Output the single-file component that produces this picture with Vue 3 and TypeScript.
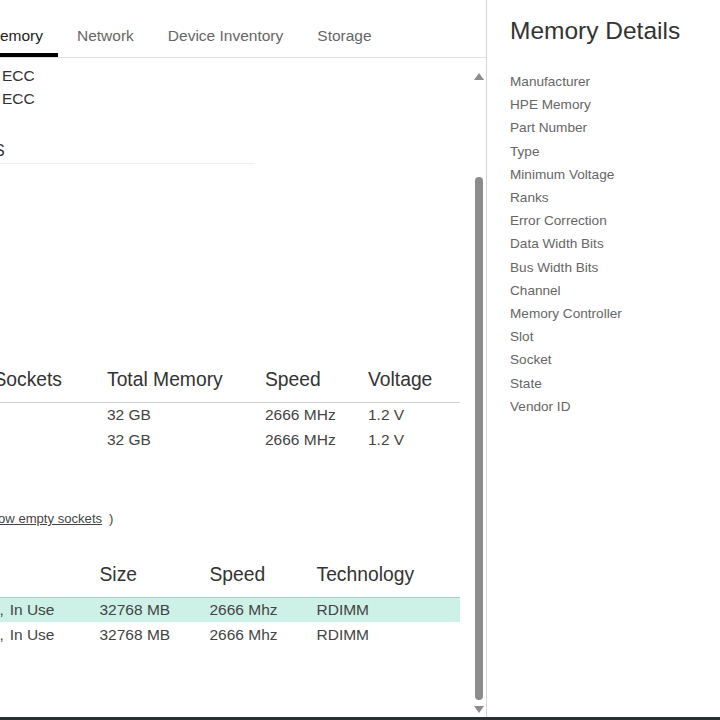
<script setup lang="ts">
const tabs = ['Memory', 'Network', 'Device Inventory', 'Storage']

const processors = [
  { total: '32 GB', speed: '2666 MHz', voltage: '1.2 V' },
  { total: '32 GB', speed: '2666 MHz', voltage: '1.2 V' },
]

const dimms = [
  { health: 'Good', state: 'In Use', size: '32768 MB', speed: '2666 Mhz', tech: 'RDIMM', selected: true },
  { health: 'Good', state: 'In Use', size: '32768 MB', speed: '2666 Mhz', tech: 'RDIMM', selected: false },
]

const details = [
  'Manufacturer', 'HPE Memory', 'Part Number', 'Type', 'Minimum Voltage',
  'Ranks', 'Error Correction', 'Data Width Bits', 'Bus Width Bits', 'Channel',
  'Memory Controller', 'Slot', 'Socket', 'State', 'Vendor ID',
]
</script>

<template>
  <div class="page">
    <div class="shell">
      <main class="main">
        <nav class="tabs">
          <a v-for="(t, i) in tabs" :key="t" class="tab" :class="{ active: i === 0 }">{{ t }}</a>
        </nav>
        <div class="body">
          <div class="content">
            <p class="ecc">ECC</p>
            <p class="ecc">ECC</p>
            <h3 class="section">S</h3>

            <div class="table one">
              <div class="row head">
                <span class="first">Sockets</span><span>Total Memory</span><span>Speed</span><span>Voltage</span>
              </div>
              <div v-for="(p, i) in processors" :key="i" class="row cell">
                <span></span><span>{{ p.total }}</span><span>{{ p.speed }}</span><span>{{ p.voltage }}</span>
              </div>
            </div>

            <p class="toggle"><a>Show empty sockets</a><span class="paren">)</span></p>

            <div class="table two">
              <div class="row head">
                <span></span><span>Size</span><span>Speed</span><span>Technology</span>
              </div>
              <div v-for="(d, i) in dimms" :key="i" class="row cell" :class="{ selected: d.selected }">
                <span class="status">{{ d.health }},<span class="state">{{ d.state }}</span></span><span>{{ d.size }}</span><span>{{ d.speed }}</span><span>{{ d.tech }}</span>
              </div>
            </div>
          </div>

          <div class="scrollbar" aria-hidden="true">
            <i class="arrow up"></i>
            <i class="thumb"></i>
            <i class="arrow down"></i>
          </div>
        </div>
      </main>

      <aside class="side">
        <h2 class="side-title">Memory Details</h2>
        <ul class="side-list">
          <li v-for="d in details" :key="d">{{ d }}</li>
        </ul>
      </aside>
    </div>
    <div class="taskbar"></div>
  </div>
</template>

<style>
html, body {
  margin: 0;
  background: #fff;
}
</style>

<style scoped>
.page {
  width: 720px;
  height: 720px;
  display: flex;
  flex-direction: column;
  overflow: hidden;
  font-family: "Liberation Sans", Arial, sans-serif;
  color: #333;
}

.shell {
  flex: 1;
  min-height: 0;
  display: flex;
}

.main {
  width: 487px;
  flex: 0 0 auto;
  box-sizing: border-box;
  border-right: 1px solid #d6d6d6;
  display: flex;
  flex-direction: column;
  overflow: hidden;
}

.tabs {
  height: 58px;
  flex: 0 0 auto;
  box-sizing: border-box;
  border-bottom: 1px solid #e0e0e0;
  display: flex;
  gap: 4px;
  margin-left: -28px;
  padding-top: 26px;
}

.tab {
  box-sizing: border-box;
  height: 31px;
  padding: 0 15px;
  font-size: 15.5px;
  line-height: 20px;
  color: #666;
  white-space: nowrap;
}

.tab.active {
  color: #222;
  border-bottom: 4px solid #000;
}

.body {
  flex: 1;
  min-height: 0;
  display: flex;
}

.content {
  flex: 1;
  min-width: 0;
  padding-top: 6px;
  overflow: hidden;
}

.ecc {
  margin: 0 0 0 2px;
  font-size: 15.5px;
  line-height: 23px;
  color: #333;
}

.section {
  width: 261px;
  margin: 30px 0 0 -6px;
  padding-bottom: 1px;
  border-bottom: 1px solid #f0f0f0;
  font-size: 16px;
  font-weight: 400;
  line-height: 22px;
  color: #333;
}

.table {
  margin-left: -100px;
  width: 560px;
}

.table.one {
  margin-top: 200px;
}

.table.two {
  margin-top: 30px;
}

.row {
  display: grid;
}

.one .row {
  grid-template-columns: 207px 158px 103px 1fr;
}

.two .row {
  grid-template-columns: 199.5px 110px 107px 1fr;
}

.head {
  height: 39px;
  box-sizing: border-box;
  font-size: 19.3px;
  line-height: 32px;
  color: #333;
  border-bottom: 1px solid #cfcfcf;
  white-space: nowrap;
}

.first {
  text-align: right;
  padding-right: 45px;
}

.two .head {
  border-bottom: 0;
  height: 38px;
}

.cell {
  height: 25px;
  font-size: 15.5px;
  line-height: 25px;
  color: #444;
  white-space: nowrap;
}

.one .cell {
  line-height: 23px;
}

.status {
  text-align: right;
  padding-right: 45px;
}

.state {
  margin-left: 5.8px;
}

.cell.selected {
  background: #cdf1e7;
  box-shadow: inset 0 1px 0 #a9d3c8;
}

.toggle {
  margin: 56px 0 0 -18px;
  height: 20px;
  font-size: 13.1px;
  line-height: 20px;
  color: #444;
  white-space: nowrap;
}

.toggle a {
  text-decoration: underline;
}

.paren {
  margin-left: 7px;
}

.scrollbar {
  width: 14px;
  flex: 0 0 auto;
  box-sizing: border-box;
  padding: 15px 0 3px;
  display: flex;
  flex-direction: column;
  align-items: center;
}

.arrow {
  width: 0;
  height: 0;
  border-left: 5px solid transparent;
  border-right: 5px solid transparent;
}

.arrow.up {
  border-bottom: 7px solid #8c8c8c;
}

.arrow.down {
  border-top: 7px solid #8c8c8c;
}

.thumb {
  width: 8px;
  height: 523px;
  margin: 97px 0 6px;
  border-radius: 4px;
  background: #8c8c8c;
}

.side {
  flex: 1;
  min-width: 0;
  padding: 16px 0 0 23px;
}

.side-title {
  margin: 0;
  font-size: 24.5px;
  font-weight: 400;
  line-height: 30px;
  color: #333;
}

.side-list {
  list-style: none;
  margin: 24px 0 0;
  padding: 0;
}

.side-list li {
  font-size: 13.6px;
  line-height: 23.2px;
  color: #666;
}

.taskbar {
  height: 3px;
  flex: 0 0 auto;
  background: #2b2f33;
}
</style>
